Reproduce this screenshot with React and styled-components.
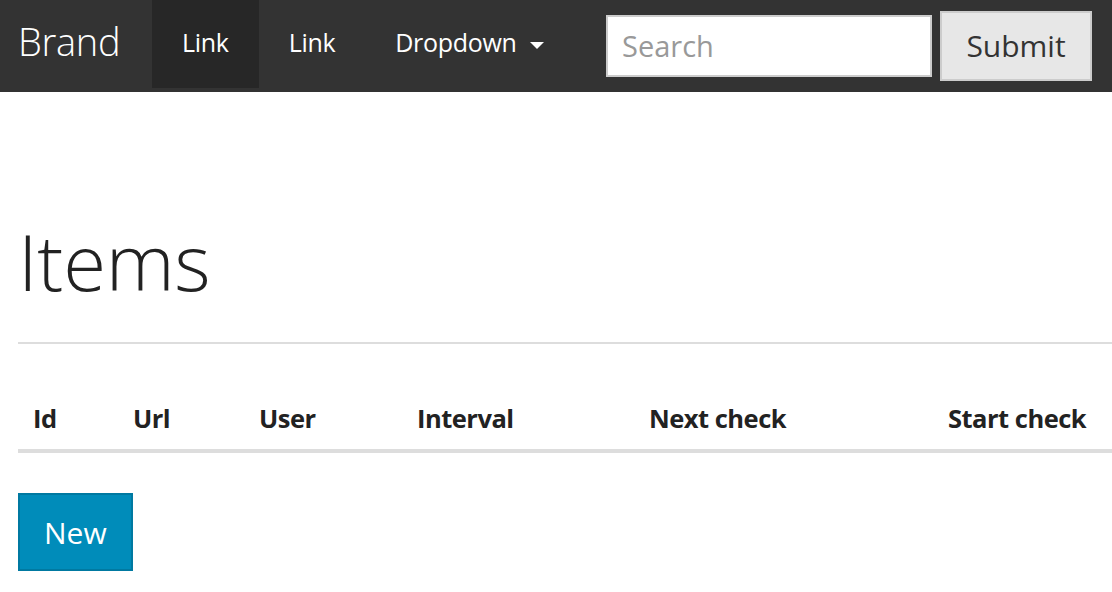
import React from "react";
import styled, { createGlobalStyle } from "styled-components";

const GlobalStyle = createGlobalStyle`
  html, body {
    margin: 0;
    padding: 0;
    background: #fff;
    overflow: hidden;
  }

  body {
    font-family: "Open Sans", "Liberation Sans", sans-serif;
    color: #222;
  }

  * {
    box-sizing: border-box;
  }
`;

const columns = [
  { label: "Id", width: 100 },
  { label: "Url", width: 126 },
  { label: "User", width: 158 },
  { label: "Interval", width: 232 },
  { label: "Next check", width: 299 },
  { label: "Start check" },
];

const App = () => {
  return (
    <>
      <GlobalStyle />
      <Navbar>
        <Brand href="#">Brand</Brand>
        <NavList>
          <NavLink href="#" active>
            Link
          </NavLink>
          <NavLink href="#">Link</NavLink>
          <NavLink href="#">
            Dropdown <Caret />
          </NavLink>
        </NavList>
        <SearchForm onSubmit={(e) => e.preventDefault()}>
          <SearchInput type="text" placeholder="Search" />
          <SubmitButton type="submit">Submit</SubmitButton>
        </SearchForm>
      </Navbar>

      <Main>
        <PageHeader>
          <h1>Items</h1>
        </PageHeader>

        <Table>
          <colgroup>
            {columns.map((c) => (
              <col key={c.label} style={c.width ? { width: c.width } : undefined} />
            ))}
          </colgroup>
          <thead>
            <tr>
              {columns.map((c) => (
                <th key={c.label}>{c.label}</th>
              ))}
            </tr>
          </thead>
          <tbody></tbody>
        </Table>

        <PrimaryButton>New</PrimaryButton>
      </Main>
    </>
  );
};

export default App;

const Navbar = styled.nav`
  display: flex;
  align-items: flex-start;
  height: 92px;
  background: #333333;
`;

const Brand = styled.a`
  display: flex;
  align-items: center;
  width: 152px;
  height: 88px;
  padding: 0 0 6px 18px;
  font-size: 38px;
  font-weight: 300;
  letter-spacing: -0.3px;
  color: #fff;
  text-decoration: none;
`;

const NavList = styled.div`
  display: flex;
  align-items: flex-start;
`;

const NavLink = styled.a`
  display: flex;
  align-items: center;
  height: 88px;
  padding: 0 30px 4px;
  font-size: 25px;
  letter-spacing: -0.3px;
  color: #fff;
  text-decoration: none;
  background: ${(p) => (p.active ? "#272727" : "transparent")};
  white-space: pre;
`;

const Caret = styled.span`
  display: inline-block;
  width: 0;
  height: 0;
  margin-left: 7px;
  margin-top: 6px;
  border-top: 7px solid #fff;
  border-left: 7.5px solid transparent;
  border-right: 7.5px solid transparent;
`;

const SearchForm = styled.form`
  display: flex;
  align-items: center;
  gap: 8px;
  height: 92px;
  margin: 0 20px 0 auto;
  padding-bottom: 1px;
`;

const SearchInput = styled.input`
  width: 326px;
  height: 62px;
  padding: 0 14px;
  border: 2px solid #cccccc;
  border-radius: 0;
  background: #fff;
  font-family: "Open Sans", "Liberation Sans", sans-serif;
  font-size: 29px;
  color: #222;
  outline: none;

  &::placeholder {
    color: #999999;
  }
`;

const SubmitButton = styled.button`
  width: 152px;
  height: 70px;
  padding: 0;
  border: 2px solid #cccccc;
  border-radius: 0;
  background: #e7e7e7;
  font-family: "Open Sans", "Liberation Sans", sans-serif;
  font-size: 30px;
  color: #333;
  cursor: pointer;
`;

const Main = styled.main`
  padding: 0 0 0 18px;
`;

const PageHeader = styled.div`
  margin-top: 127px;
  padding-bottom: 37px;
  border-bottom: 2px solid #dddddd;

  h1 {
    margin: 0;
    font-size: 78px;
    font-weight: 300;
    line-height: 1.1;
    letter-spacing: -0.3px;
    color: #222;
  }
`;

const Table = styled.table`
  width: 100%;
  margin-top: 40px;
  border-collapse: collapse;
  table-layout: fixed;

  th {
    padding: 15px 15px 12px;
    text-align: left;
    font-size: 25.5px;
    font-weight: 700;
    line-height: 1.5;
    letter-spacing: -0.5px;
    color: #222;
    border-bottom: 4px solid #dddddd;
    white-space: nowrap;
  }
`;

const PrimaryButton = styled.button`
  display: block;
  height: 78px;
  margin-top: 40px;
  padding: 0 24px;
  border: 2px solid #0079a1;
  border-radius: 0;
  background: #008cba;
  font-family: "Open Sans", "Liberation Sans", sans-serif;
  font-size: 30px;
  color: #fff;
  cursor: pointer;
`;
